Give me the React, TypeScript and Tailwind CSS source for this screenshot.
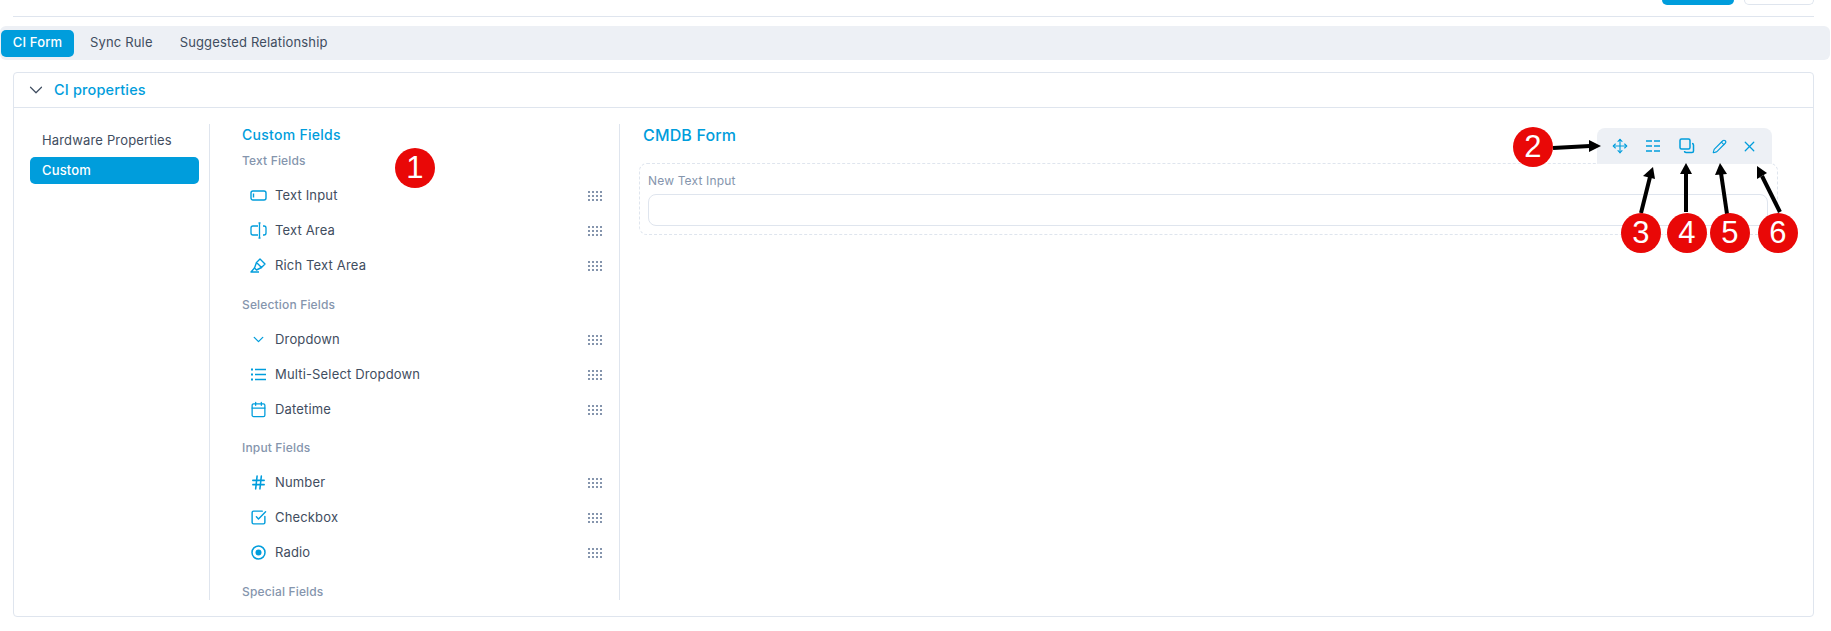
import { ReactNode } from "react";
import {
  Calendar,
  ChevronDown,
  Hash,
  Move,
  Pencil,
  SquareCheckBig,
  X,
} from "lucide-react";

function TextInputIcon() {
  return (
    <svg width="17" height="17" viewBox="0 0 17 17" fill="none" stroke="currentColor" strokeWidth="1.4">
      <rect x="1" y="4" width="15" height="9" rx="2" />
      <path d="M3.5 6.5v4" />
    </svg>
  );
}

function TextAreaIcon() {
  return (
    <svg width="17" height="17" viewBox="0 0 17 17" fill="none" stroke="currentColor" strokeWidth="1.3">
      <path d="M8 4H3a2 2 0 0 0-2 2v5a2 2 0 0 0 2 2h5" />
      <path d="M13 4h1a2 2 0 0 1 2 2v5a2 2 0 0 1-2 2h-1" />
      <path d="M8.5 1h2M8.5 16h2M9.5 1v15" />
    </svg>
  );
}

function HighlightIcon() {
  return (
    <svg width="17" height="17" viewBox="0 0 17 17" fill="none" stroke="currentColor" strokeWidth="1.4" strokeLinejoin="round">
      <path d="M10 2l5 5-3.5 3.5-5-5z" />
      <path d="M6.5 5.5L4.5 11l2 2 5-2.5" />
      <path d="M4.5 11L1 15h8" />
    </svg>
  );
}

function ListIcon() {
  return (
    <svg width="17" height="17" viewBox="0 0 17 17" fill="none" stroke="currentColor" strokeWidth="1.5">
      <path d="M5 3.5h11M5 8.5h11M5 13.5h11" />
      <path d="M1 3.5h2M1 8.5h2M1 13.5h2" strokeWidth="2" />
    </svg>
  );
}

function RadioIcon() {
  return (
    <svg width="17" height="17" viewBox="0 0 17 17" fill="none" stroke="currentColor" strokeWidth="1.5">
      <circle cx="8.5" cy="8.5" r="6.5" />
      <circle cx="8.5" cy="8.5" r="3" fill="currentColor" stroke="none" />
    </svg>
  );
}

function ColumnsIcon() {
  return (
    <svg width="16" height="16" viewBox="0 0 16 16" fill="none" stroke="currentColor" strokeWidth="1.4">
      <path d="M1 3h6M1 8h6M1 13h6M9 3h6M9 8h6M9 13h6" />
    </svg>
  );
}

function CopyIcon() {
  return (
    <svg width="16" height="16" viewBox="0 0 16 16" fill="none" stroke="currentColor" strokeWidth="1.5">
      <rect x="1" y="1" width="10" height="10" rx="1.5" />
      <path d="M13 5.5a1.5 1.5 0 0 1 1.5 1.5v6a1.5 1.5 0 0 1-1.5 1.5H7A1.5 1.5 0 0 1 5.5 13" />
    </svg>
  );
}

function GripIcon() {
  const dots = [];
  for (let row = 0; row < 3; row++) {
    for (let col = 0; col < 4; col++) {
      dots.push(<rect key={`${row}-${col}`} x={col * 4} y={row * 4} width="2" height="2" />);
    }
  }
  return (
    <svg width="14" height="10" viewBox="0 0 14 10" fill="#8595ad">
      {dots}
    </svg>
  );
}

function FieldRow({ icon, label }: { icon: ReactNode; label: string }) {
  return (
    <div className="flex h-[35px] items-center pl-[8px] pr-[17px]">
      <span className="flex w-[25px] shrink-0 text-[#009ddc]">{icon}</span>
      <span className="flex-1 text-[13px] text-[#3f4d60]">{label}</span>
      <GripIcon />
    </div>
  );
}

function GroupLabel({ label, className }: { label: string; className: string }) {
  return <div className={`text-[12px] font-medium leading-[16px] text-[#8595ad] ${className}`}>{label}</div>;
}

function Badge({ n, className }: { n: number; className: string }) {
  return (
    <div
      className={`absolute flex h-[40px] w-[40px] items-center justify-center rounded-full bg-[#e90807] font-['Liberation_Sans',sans-serif] text-[31px] text-white ${className}`}
    >
      {n}
    </div>
  );
}

function Arrows() {
  const lines = [
    [1553, 148, 1590, 146],
    [1641, 213, 1650, 177],
    [1686, 212, 1686, 173],
    [1727, 214, 1721, 173],
    [1780, 212, 1762, 176],
  ];
  const heads = [
    "1601,146 1589,140 1589,152",
    "1653,167 1643,176 1655,179",
    "1686,163 1680,174 1692,174",
    "1720,163 1715,175 1727,174",
    "1757,166 1757,179 1767,173",
  ];
  return (
    <svg className="pointer-events-none absolute left-0 top-0" width="1831" height="631">
      {lines.map(([x1, y1, x2, y2], i) => (
        <line key={i} x1={x1} y1={y1} x2={x2} y2={y2} stroke="#000" strokeWidth="4" />
      ))}
      {heads.map((points, i) => (
        <polygon key={i} points={points} fill="#000" />
      ))}
    </svg>
  );
}

export default function App() {
  return (
    <div className="relative h-[631px] w-[1831px] overflow-hidden bg-white font-['Inter',sans-serif] tracking-[0.01em]">
      {/* page header, only the bottom of the buttons is in frame */}
      <div className="mx-[13px] mr-[17px] flex h-[17px] items-start justify-end gap-[10px] border-b border-[#dfe5ee]">
        <div className="mb-auto h-[5px] w-[72px] rounded-b-[6px] bg-[#009ddc]" />
        <div className="h-[5px] w-[70px] rounded-b-[6px] border border-t-0 border-[#dfe5ee]" />
      </div>

      <div className="mt-[9px] mr-[1px] flex h-[34px] items-center gap-[16px] rounded-[6px] bg-[#edf0f5] pl-[1px]">
        <div className="flex h-[27px] w-[73px] items-center justify-center rounded-[5px] bg-[#009ddc] text-[13px] font-medium text-white">
          CI Form
        </div>
        <span className="text-[13px] text-[#3f4d60]">Sync Rule</span>
        <span className="ml-[11px] text-[13px] text-[#3f4d60]">Suggested Relationship</span>
      </div>

      <div className="ml-[13px] mr-[17px] mt-[12px] flex h-[545px] flex-col rounded-[4px] border border-[#dfe5ee]">
        <div className="flex h-[35px] items-center border-b border-[#dfe5ee] pl-[11px]">
          <ChevronDown size={22} strokeWidth={1.3} className="text-[#3f4d60]" />
          <span className="ml-[7px] text-[14.5px] font-medium text-[#009ddc]">CI properties</span>
        </div>

        <div className="flex h-[492px] pt-[16px]">
          <div className="flex w-[196px] flex-col border-r border-[#dfe5ee] pl-[16px] pr-[10px] pt-[2px]">
            <div className="flex h-[30px] items-center pl-[12px] text-[13px] text-[#3f4d60]">Hardware Properties</div>
            <div className="mt-[1px] flex h-[27px] items-center rounded-[5px] bg-[#009ddc] pl-[12px] text-[13px] font-medium text-white">
              Custom
            </div>
          </div>

          <div className="h-full w-[410px] overflow-hidden border-r border-[#dfe5ee] pl-[32px] pt-[1px]">
            <div className="text-[14px] font-medium leading-[20px] tracking-[0.02em] text-[#009ddc]">Custom Fields</div>
            <GroupLabel label="Text Fields" className="mb-[9px] mt-[8px]" />
            <FieldRow icon={<TextInputIcon />} label="Text Input" />
            <FieldRow icon={<TextAreaIcon />} label="Text Area" />
            <FieldRow icon={<HighlightIcon />} label="Rich Text Area" />
            <GroupLabel label="Selection Fields" className="mb-[9px] mt-[14px]" />
            <FieldRow icon={<ChevronDown size={17} strokeWidth={1.8} />} label="Dropdown" />
            <FieldRow icon={<ListIcon />} label="Multi-Select Dropdown" />
            <FieldRow icon={<Calendar size={17} strokeWidth={1.8} />} label="Datetime" />
            <GroupLabel label="Input Fields" className="mb-[9px] mt-[13px]" />
            <FieldRow icon={<Hash size={17} strokeWidth={2.2} />} label="Number" />
            <FieldRow icon={<SquareCheckBig size={17} strokeWidth={2} />} label="Checkbox" />
            <FieldRow icon={<RadioIcon />} label="Radio" />
            <GroupLabel label="Special Fields" className="mt-[14px]" />
          </div>

          <div className="relative flex-1 pl-[19px]">
            <div className="pl-[4px] text-[16px] font-medium leading-[22px] text-[#009ddc]">CMDB Form</div>
            <div className="relative mt-[17px] h-[72px] w-[1139px] rounded-[8px] border border-dashed border-[#dfe5ee] pl-[8px] pr-[9px] pt-[8px]">
              <div className="text-[12px] leading-[18px] text-[#8595ad]">New Text Input</div>
              <div className="mt-[4px] h-[32px] rounded-[8px] border border-[#dfe5ee]" />
              <div className="absolute -top-[36px] right-[5px] flex h-[36px] w-[175px] items-center rounded-t-[8px] bg-[#edf0f5] pl-[15px] text-[#009ddc]">
                <span className="flex w-[33px]"><Move size={16} strokeWidth={1.7} /></span>
                <span className="flex w-[34px]"><ColumnsIcon /></span>
                <span className="flex w-[33px]"><CopyIcon /></span>
                <span className="flex w-[29px]"><Pencil size={15} strokeWidth={1.8} /></span>
                <span className="flex"><X size={17} strokeWidth={1.8} /></span>
              </div>
            </div>
          </div>
        </div>
      </div>

      <Arrows />
      <Badge n={1} className="left-[395px] top-[148px]" />
      <Badge n={2} className="left-[1513px] top-[127px]" />
      <Badge n={3} className="left-[1621px] top-[213px]" />
      <Badge n={4} className="left-[1667px] top-[213px]" />
      <Badge n={5} className="left-[1710px] top-[213px]" />
      <Badge n={6} className="left-[1758px] top-[213px]" />
    </div>
  );
}
